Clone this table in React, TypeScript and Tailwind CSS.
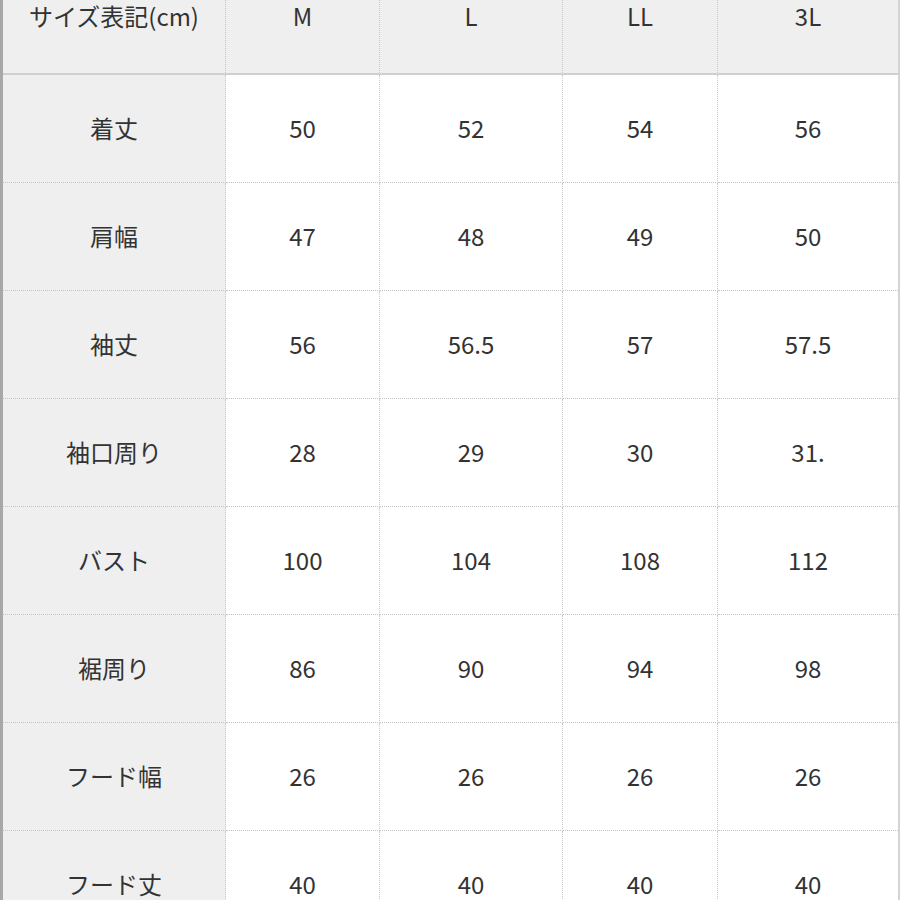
import React from "react";

const headers = ["サイズ表記(cm)", "M", "L", "LL", "3L"];
const rows: string[][] = [
  ["着丈", "50", "52", "54", "56"],
  ["肩幅", "47", "48", "49", "50"],
  ["袖丈", "56", "56.5", "57", "57.5"],
  ["袖口周り", "28", "29", "30", "31."],
  ["バスト", "100", "104", "108", "112"],
  ["裾周り", "86", "90", "94", "98"],
  ["フード幅", "26", "26", "26", "26"],
  ["フード丈", "40", "40", "40", "40"],
];

export default function App() {
  return (
    <div
      className="w-[900px] h-[900px] overflow-hidden bg-white text-[#333] text-[24px]"
      style={{ fontFamily: '"Noto Sans CJK JP", "Noto Sans", sans-serif' }}
    >
      <div className="flex">
        <div className="w-[3px] shrink-0 bg-[#a8a8a8]" />
        <div className="grid grid-cols-[223px_154px_183px_155px_180px] border-r-2 border-[#d4d4d4]">
          {headers.map((h, i) => (
            <div
              key={"h" + i}
              className={`h-[75px] bg-[#efefef] border-b-2 border-b-[#cfcfcf] flex justify-center ${
                i < 4 ? "border-r border-r-[#c8c8c8] border-dotted" : ""
              }`}
              style={{ borderBottomStyle: "solid" }}
            >
              <span className="leading-[32px]">{h}</span>
            </div>
          ))}
          {rows.map((r, ri) =>
            r.map((c, ci) => (
              <div
                key={ri + "-" + ci}
                className={`h-[108px] flex items-center justify-center border-b border-dotted border-b-[#c4c4c4] ${
                  ci === 0 ? "bg-[#efefef]" : "bg-white"
                } ${ci < 4 ? "border-r border-r-[#c8c8c8]" : ""}`}
              >
                <span className="leading-none -mt-[2px]">{c}</span>
              </div>
            ))
          )}
        </div>
      </div>
    </div>
  );
}
